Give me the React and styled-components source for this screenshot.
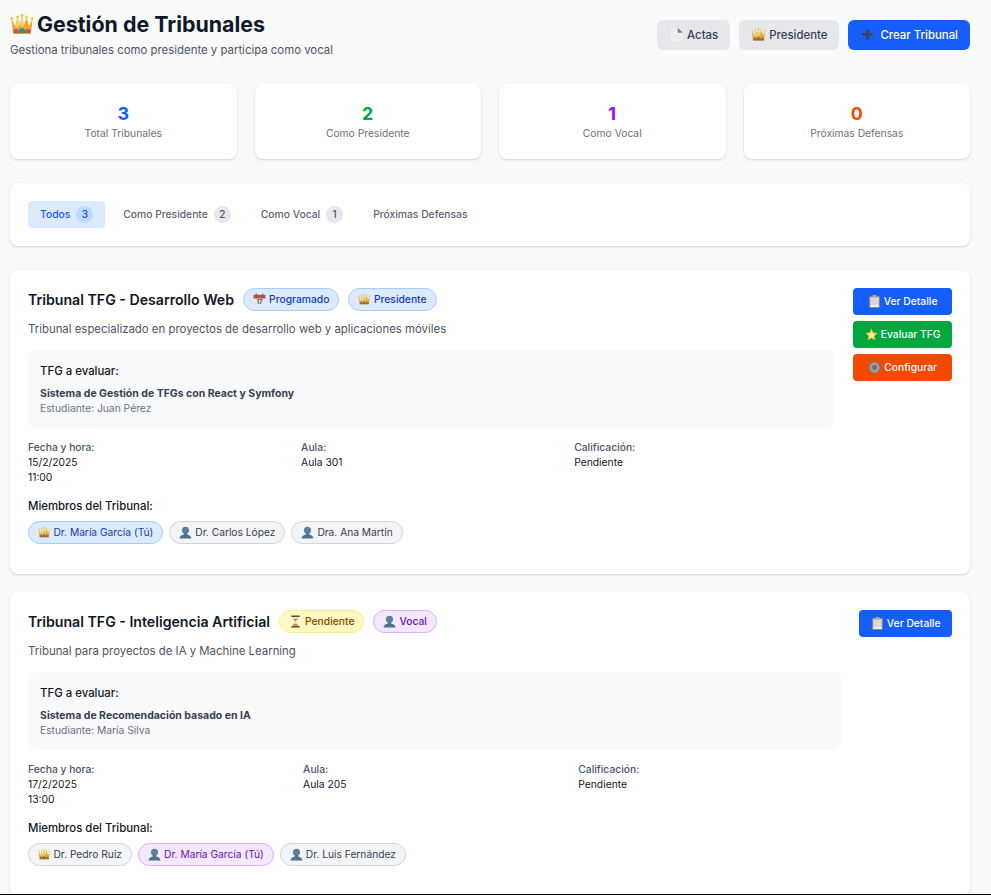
import React from 'react'
import styled, { createGlobalStyle } from 'styled-components'

const GlobalStyle = createGlobalStyle`
  * { box-sizing: border-box; }
  html, body { margin: 0; padding: 0; background: #f9fafb; }
  body { font-family: Inter, "Liberation Sans", sans-serif; color: #101828; }
`

const Page = styled.div`
  height: 895px;
  overflow: hidden;
  padding: 10px 21px 0 10px;
  background: #f9fafb;
  border-bottom: 1px solid #000;
`

const Header = styled.header`
  display: flex;
  justify-content: space-between;
  align-items: flex-start;
  height: 50px;
  margin-bottom: 24px;
`
const Title = styled.h1`
  display: flex;
  align-items: center;
  gap: 3px;
  margin: 0;
  font-size: 21.4px;
  line-height: 28px;
  font-weight: 700;
  color: #101828;
`
const Subtitle = styled.p`
  margin: 3px 0 0;
  font-size: 11.4px;
  line-height: 18px;
  color: #4a5565;
`
const HeaderActions = styled.div`
  display: flex;
  gap: 9px;
  margin-top: 10px;
`
const HeaderButton = styled.button`
  display: inline-flex;
  align-items: center;
  justify-content: center;
  gap: ${p => p.$gap || 3}px;
  height: 30px;
  padding: 0 12px 1px;
  border: 0;
  border-radius: 6px;
  font-family: inherit;
  font-size: 11.4px;
  font-weight: 500;
  color: ${p => (p.$primary ? '#fff' : '#364153')};
  background: ${p => (p.$primary ? '#155dfc' : '#e5e7eb')};
`

const StatsGrid = styled.section`
  display: grid;
  grid-template-columns: repeat(4, 1fr);
  gap: 18px;
  margin-bottom: 24px;
`
const Panel = styled.div`
  background: #fff;
  border-radius: 8px;
  box-shadow: 0 1px 3px rgba(0, 0, 0, 0.1), 0 1px 2px rgba(0, 0, 0, 0.06);
`
const StatCard = styled(Panel)`
  height: 75px;
  padding: 18px;
  text-align: center;
`
const StatValue = styled.div`
  font-size: 18px;
  line-height: 24px;
  font-weight: 700;
  color: ${p => p.$color};
`
const StatLabel = styled.div`
  font-size: 10.3px;
  line-height: 15px;
  color: #6a7282;
`

const TabsPanel = styled(Panel)`
  display: flex;
  gap: 6px;
  height: 63px;
  padding: 18px;
  margin-bottom: 24px;
`
const Tab = styled.div`
  display: flex;
  align-items: center;
  gap: 6px;
  height: 27px;
  padding: 0 12px 1px;
  border-radius: 4px;
  font-size: 10.3px;
  font-weight: 500;
  color: ${p => (p.$active ? '#155dfc' : '#5a6372')};
  background: ${p => (p.$active ? '#dbeafe' : 'transparent')};
`
const TabCount = styled.span`
  display: flex;
  align-items: center;
  justify-content: center;
  min-width: 17px;
  height: 17px;
  padding: 0 5px;
  border-radius: 9px;
  font-size: 10px;
  color: ${p => (p.$active ? '#1447e6' : '#4a5565')};
  background: ${p => (p.$active ? '#bedbff' : '#e5e7eb')};
`

const Card = styled(Panel)`
  display: flex;
  gap: 18px;
  padding: 18px;
  margin-bottom: 18px;
`
const CardMain = styled.div`
  flex: 1;
  min-width: 0;
`
const CardTitleRow = styled.div`
  display: flex;
  align-items: center;
  gap: 9px;
`
const CardTitle = styled.h3`
  margin: 0;
  font-size: 14.15px;
  line-height: 20px;
  font-weight: 600;
  color: #101828;
`
const tones = {
  blue: ['#dbeafe', '#a3cfff', '#193cb8'],
  yellow: ['#fef9c2', '#fff085', '#894b00'],
  purple: ['#f3e8ff', '#dab2ff', '#6e11b0'],
  gray: ['#f3f4f6', '#d1d5dc', '#364153'],
}
const Pill = styled.span`
  display: inline-flex;
  align-items: center;
  gap: 3px;
  height: 23px;
  padding: 0 9px 1px;
  border: 1px solid ${p => tones[p.$tone][1]};
  border-radius: 12px;
  font-size: 10.3px;
  font-weight: 500;
  white-space: nowrap;
  color: ${p => tones[p.$tone][2]};
  background: ${p => tones[p.$tone][0]};
`
const MemberChip = styled(Pill)`
  font-size: 10.22px;
  font-weight: 400;
`
const Description = styled.p`
  margin: 9px 0 12px;
  font-size: 11.4px;
  line-height: 18px;
  color: #4a5565;
`
const TfgBox = styled.div`
  padding: 12px;
  margin-bottom: 12px;
  border-radius: 8px;
  background: #f9fafb;
`
const SectionLabel = styled.div`
  font-size: 11.4px;
  line-height: 18px;
  font-weight: 500;
  color: #101828;
`
const TfgName = styled.div`
  margin-top: 6px;
  font-size: 10.5px;
  line-height: 15px;
  font-weight: 700;
  color: #364153;
`
const TfgStudent = styled.div`
  font-size: 10.3px;
  line-height: 15px;
  color: #6a7282;
`
const InfoGrid = styled.div`
  display: grid;
  grid-template-columns: repeat(3, 1fr);
  gap: 12px;
  margin-bottom: 12px;
`
const InfoLabel = styled.div`
  font-size: 10.3px;
  line-height: 15px;
  font-weight: 500;
  color: #4a5565;
`
const InfoValue = styled.div`
  font-size: 10.3px;
  line-height: 15px;
  color: #101828;
`
const Members = styled.div`
  display: flex;
  gap: 6px;
  margin: 6px 0 12px;
`
const CardActions = styled.div`
  display: flex;
  flex-direction: column;
  gap: 6px;
  flex-shrink: 0;
`
const ActionButton = styled.button`
  display: flex;
  align-items: center;
  justify-content: center;
  gap: 3px;
  height: 27px;
  padding: 0 11.5px 1px;
  border: 0;
  border-radius: 4px;
  font-family: inherit;
  font-size: 10.3px;
  font-weight: 500;
  color: #fff;
  background: ${p => p.$bg};
`

const Crown = ({ size = 12.5 }) => (
  <svg width={size} height={size} viewBox="0 0 24 24">
    <path d="M1.500 7L5 14 7.500 5.500 10 13 12 3.500 14 13 16.500 5.500 19 14 22.500 7 21 21.500H3z" fill="#e8a92a" />
    <path d="M10 13l2-9.500 2 9.500 -2 3zM5 14l2.500-8.500L10 13l-3 3z" fill="#f6d064" />
    <path d="M3.200 18h17.600l-.4 3.500H3.600z" fill="#a96f18" />
    <circle cx="1.800" cy="6.500" r="1.500" fill="#f5c842" />
    <circle cx="7.500" cy="5" r="1.500" fill="#f5c842" />
    <circle cx="12" cy="3.200" r="1.500" fill="#f5c842" />
    <circle cx="16.500" cy="5" r="1.500" fill="#f5c842" />
    <circle cx="22.200" cy="6.500" r="1.500" fill="#f5c842" />
    <circle cx="12" cy="18.500" r="2.600" fill="#1c9c8e" />
    <circle cx="6" cy="18.800" r="2" fill="#d6447f" />
    <circle cx="18" cy="18.800" r="2" fill="#d6447f" />
  </svg>
)
const Sheet = ({ size = 13 }) => (
  <svg width={size} height={size} viewBox="0 0 24 24">
    <path d="M3 1h11v7h7v15H3z" fill="#f0f0f0" />
    <path d="M14 1l8 8h-8z" fill="#808080" />
    <path d="M6 12h12M6 15h12M6 18h12" stroke="#dedede" />
  </svg>
)
const Calendar = ({ size = 13 }) => (
  <svg width={size} height={size} viewBox="0 0 24 24">
    <rect x="1" y="3" width="22" height="20" rx="1.500" fill="#e6e6e6" />
    <path d="M1 4.500A1.500 1.500 0 0 1 2.500 3h19A1.500 1.500 0 0 1 23 4.500V10H1z" fill="#bd4b48" />
    <rect x="5" y="1" width="2" height="5" fill="#6e6e6e" />
    <rect x="17" y="1" width="2" height="5" fill="#6e6e6e" />
    <text x="12" y="21" fontSize="11" fontWeight="700" textAnchor="middle" fill="#555" fontFamily="Inter, sans-serif">17</text>
  </svg>
)
const Person = ({ size = 13 }) => (
  <svg width={size} height={size} viewBox="0 0 24 24">
    <circle cx="12" cy="8" r="6.500" fill="#5b7f9c" />
    <path d="M9 13h6v2.500c4 1 7.500 2.500 8 7.500H1c.5-5 4-6.500 8-7.500z" fill="#4d7391" />
  </svg>
)
const Clipboard = ({ size = 13 }) => (
  <svg width={size} height={size} viewBox="0 0 24 24">
    <rect x="2" y="2" width="20" height="22" rx="1.500" fill="#8a8580" />
    <rect x="4" y="4" width="16" height="18" fill="#d8d8d8" />
    <rect x="4" y="19" width="16" height="3" fill="#f4f4f4" />
    <rect x="8.500" y="0" width="7" height="4.500" rx="1" fill="#a9a9a9" />
  </svg>
)
const Star = ({ size = 13 }) => (
  <svg width={size} height={size} viewBox="0 0 24 24">
    <path d="M12 1l3.400 7.400 8 .9-5.900 5.400 1.600 8L12 18.700l-7.100 4 1.600-8L.6 9.300l8-.9z" fill="#f8c93a" />
    <path d="M12 6l2 4.500 4.900.5-3.600 3.300 1 4.900L12 16.300 7.700 18.700l1-4.900L5.100 11l4.900-.5z" fill="#fdf0a6" />
  </svg>
)
const Gear = ({ size = 13 }) => (
  <svg width={size} height={size} viewBox="0 0 24 24">
    <circle cx="12" cy="12" r="10.500" fill="none" stroke="#6f7378" strokeWidth="3" strokeDasharray="3.500 2.100" />
    <circle cx="12" cy="12" r="7" fill="none" stroke="#9a9da3" strokeWidth="5" />
    <circle cx="12" cy="12" r="4" fill="#6d7177" />
  </svg>
)
const Hourglass = ({ size = 13 }) => (
  <svg width={size} height={size} viewBox="0 0 24 24">
    <path d="M6 3h12c0 6-4 7-4.500 9 .5 2 4.500 3 4.500 9H6c0-6 4-7 4.500-9C10 10 6 9 6 3z" fill="#e6e2da" />
    <path d="M8 7h8c-1 2.500-3 3-4 5-1-2-3-2.500-4-5zM7 20c.5-2.500 3-4 5-4s4.500 1.500 5 4z" fill="#b98a52" />
    <rect x="4" y="1" width="16" height="2.500" rx="1" fill="#6b4a2f" />
    <rect x="4" y="20.500" width="16" height="2.500" rx="1" fill="#6b4a2f" />
  </svg>
)
const Plus = () => (
  <svg width="15" height="15" viewBox="0 0 15 15">
    <path d="M7.500 2v11M2 7.500h11" stroke="#444" strokeWidth="2.400" />
  </svg>
)

const stats = [
  { value: 3, label: 'Total Tribunales', color: '#155dfc' },
  { value: 2, label: 'Como Presidente', color: '#00a63e' },
  { value: 1, label: 'Como Vocal', color: '#9810fa' },
  { value: 0, label: 'Próximas Defensas', color: '#f54900' },
]

const tabs = [
  { label: 'Todos', count: 3, active: true },
  { label: 'Como Presidente', count: 2 },
  { label: 'Como Vocal', count: 1 },
  { label: 'Próximas Defensas' },
]

const tribunales = [
  {
    title: 'Tribunal TFG - Desarrollo Web',
    badges: [
      { tone: 'blue', Icon: Calendar, text: 'Programado' },
      { tone: 'blue', Icon: Crown, text: 'Presidente' },
    ],
    description: 'Tribunal especializado en proyectos de desarrollo web y aplicaciones móviles',
    tfg: 'Sistema de Gestión de TFGs con React y Symfony',
    student: 'Juan Pérez',
    date: '15/2/2025',
    time: '11:00',
    room: 'Aula 301',
    members: [
      { tone: 'blue', Icon: Crown, text: 'Dr. María García (Tú)' },
      { tone: 'gray', Icon: Person, text: 'Dr. Carlos López' },
      { tone: 'gray', Icon: Person, text: 'Dra. Ana Martín' },
    ],
    actions: [
      { bg: '#155dfc', Icon: Clipboard, text: 'Ver Detalle' },
      { bg: '#00a63e', Icon: Star, text: 'Evaluar TFG' },
      { bg: '#f54900', Icon: Gear, text: 'Configurar' },
    ],
  },
  {
    title: 'Tribunal TFG - Inteligencia Artificial',
    badges: [
      { tone: 'yellow', Icon: Hourglass, text: 'Pendiente' },
      { tone: 'purple', Icon: Person, text: 'Vocal' },
    ],
    description: 'Tribunal para proyectos de IA y Machine Learning',
    tfg: 'Sistema de Recomendación basado en IA',
    student: 'María Silva',
    date: '17/2/2025',
    time: '13:00',
    room: 'Aula 205',
    members: [
      { tone: 'gray', Icon: Crown, text: 'Dr. Pedro Ruiz' },
      { tone: 'purple', Icon: Person, text: 'Dr. María García (Tú)' },
      { tone: 'gray', Icon: Person, text: 'Dr. Luis Fernández' },
    ],
    actions: [{ bg: '#155dfc', Icon: Clipboard, text: 'Ver Detalle' }],
  },
]

export default function App() {
  return (
    <Page>
      <GlobalStyle />
      <Header>
        <div>
          <Title><Crown size={24} />Gestión de Tribunales</Title>
          <Subtitle>Gestiona tribunales como presidente y participa como vocal</Subtitle>
        </div>
        <HeaderActions>
          <HeaderButton><Sheet size={15} />Actas</HeaderButton>
          <HeaderButton><Crown size={15} />Presidente</HeaderButton>
          <HeaderButton $primary $gap={5}><Plus />Crear Tribunal</HeaderButton>
        </HeaderActions>
      </Header>

      <StatsGrid>
        {stats.map(s => (
          <StatCard key={s.label}>
            <StatValue $color={s.color}>{s.value}</StatValue>
            <StatLabel>{s.label}</StatLabel>
          </StatCard>
        ))}
      </StatsGrid>

      <TabsPanel>
        {tabs.map(t => (
          <Tab key={t.label} $active={t.active}>
            {t.label}
            {t.count && <TabCount $active={t.active}>{t.count}</TabCount>}
          </Tab>
        ))}
      </TabsPanel>

      {tribunales.map(t => (
        <Card key={t.title}>
          <CardMain>
            <CardTitleRow>
              <CardTitle>{t.title}</CardTitle>
              {t.badges.map(({ tone, Icon, text }) => (
                <Pill key={text} $tone={tone}><Icon />{text}</Pill>
              ))}
            </CardTitleRow>
            <Description>{t.description}</Description>
            <TfgBox>
              <SectionLabel>TFG a evaluar:</SectionLabel>
              <TfgName>{t.tfg}</TfgName>
              <TfgStudent>Estudiante: {t.student}</TfgStudent>
            </TfgBox>
            <InfoGrid>
              <div>
                <InfoLabel>Fecha y hora:</InfoLabel>
                <InfoValue>{t.date}</InfoValue>
                <InfoValue>{t.time}</InfoValue>
              </div>
              <div>
                <InfoLabel>Aula:</InfoLabel>
                <InfoValue>{t.room}</InfoValue>
              </div>
              <div>
                <InfoLabel>Calificación:</InfoLabel>
                <InfoValue>Pendiente</InfoValue>
              </div>
            </InfoGrid>
            <SectionLabel>Miembros del Tribunal:</SectionLabel>
            <Members>
              {t.members.map(({ tone, Icon, text }) => (
                <MemberChip key={text} $tone={tone}><Icon />{text}</MemberChip>
              ))}
            </Members>
          </CardMain>
          <CardActions>
            {t.actions.map(({ bg, Icon, text }) => (
              <ActionButton key={text} $bg={bg}><Icon />{text}</ActionButton>
            ))}
          </CardActions>
        </Card>
      ))}
    </Page>
  )
}
